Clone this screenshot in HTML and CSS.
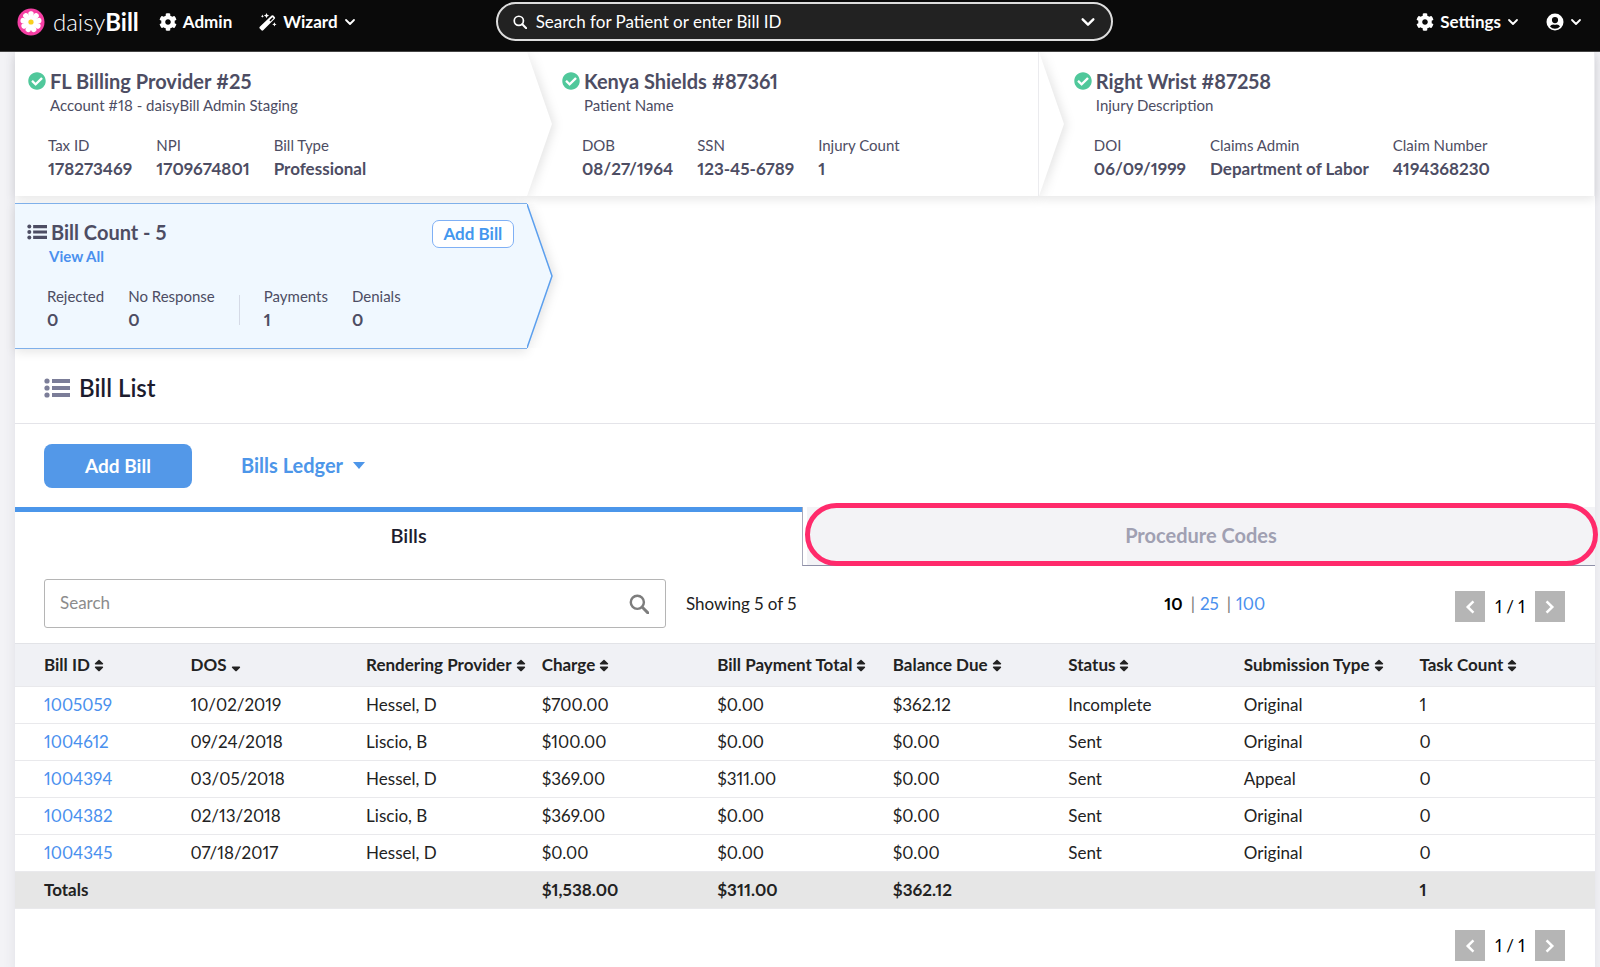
FILE: index.html
```html
<!DOCTYPE html>
<html lang="en">

<head>
    <meta charset="UTF-8">
    <meta name="viewport" content="width=device-width, initial-scale=1.0">
    <title>daisyBill - Bill List</title>
    <link rel="stylesheet" href="styles.css">
</head>

<body>
    <!-- icons -->
    <svg class="sprite" aria-hidden="true">
        <symbol id="cog" viewBox="0 0 512 512">
            <path d="M487.4 315.7l-42.6-24.6c4.3-23.2 4.3-47 0-70.2l42.6-24.6c4.9-2.8 7.1-8.6 5.5-14-11.1-35.6-30-67.8-54.7-94.6-3.8-4.1-10-5.1-14.8-2.3L380.8 110c-17.9-15.4-38.5-27.3-60.8-35.1V25.8c0-5.6-3.9-10.5-9.4-11.7-36.7-8.2-74.3-7.8-109.2 0-5.5 1.2-9.4 6.1-9.4 11.7V75c-22.2 7.9-42.8 19.8-60.8 35.1L88.7 85.5c-4.9-2.8-11-1.9-14.8 2.3-24.7 26.7-43.6 58.9-54.7 94.6-1.7 5.4.6 11.2 5.5 14L67.3 221c-4.3 23.2-4.3 47 0 70.2l-42.6 24.6c-4.9 2.8-7.1 8.6-5.5 14 11.1 35.6 30 67.8 54.7 94.6 3.8 4.1 10 5.1 14.8 2.3l42.6-24.6c17.9 15.4 38.5 27.3 60.8 35.1v49.2c0 5.6 3.9 10.5 9.4 11.7 36.7 8.2 74.3 7.8 109.2 0 5.5-1.2 9.4-6.1 9.4-11.7v-49.2c22.2-7.9 42.8-19.8 60.8-35.1l42.6 24.6c4.9 2.8 11 1.9 14.8-2.3 24.7-26.7 43.6-58.9 54.7-94.6 1.5-5.5-.7-11.3-5.6-14.1zM256 336c-44.1 0-80-35.9-80-80s35.9-80 80-80 80 35.9 80 80-35.9 80-80 80z" />
        </symbol>
        <symbol id="check" viewBox="0 0 512 512">
            <path d="M504 256c0 136.967-111.033 248-248 248S8 392.967 8 256 119.033 8 256 8s248 111.033 248 248zM227.314 387.314l184-184c6.248-6.248 6.248-16.379 0-22.627l-22.627-22.627c-6.248-6.249-16.379-6.249-22.628 0L216 308.118l-70.059-70.059c-6.248-6.248-16.379-6.248-22.628 0l-22.627 22.627c-6.248 6.248-6.248 16.379 0 22.627l104 104c6.249 6.249 16.379 6.249 22.628.001z" />
        </symbol>
        <symbol id="sort" viewBox="0 0 320 512">
            <path d="M41 288h238c21.4 0 32.1 25.9 17 41L177 448c-9.4 9.4-24.6 9.4-33.9 0L24 329c-15.1-15.1-4.4-41 17-41zm255-105L177 64c-9.4-9.4-24.6-9.4-33.9 0L24 183c-15.1 15.1-4.4 41 17 41h238c21.4 0 32.1-25.9 17-41z" />
        </symbol>
        <symbol id="sort-down" viewBox="0 0 320 512">
            <path d="M41 288h238c21.4 0 32.1 25.9 17 41L177 448c-9.4 9.4-24.6 9.4-33.9 0L24 329c-15.1-15.1-4.4-41 17-41z" />
        </symbol>
        <symbol id="wand" viewBox="0 0 18 18">
            <path d="M12.6 2.6a1.3 1.3 0 0 1 1.8 0l1.3 1.3a1.3 1.3 0 0 1 0 1.8L4.2 17.2a1.3 1.3 0 0 1-1.8 0L.8 15.6a1.3 1.3 0 0 1 0-1.8zm.9 1.6-3.1 3.1 1.1 1.1 3.1-3.1z" fill-rule="evenodd" />
            <path d="M7.500 0l.8 1.800 1.800.8-1.800.8-.8 1.800-.8-1.800-1.800-.8 1.800-.8zM3.400 1.600l.5 1.100 1.100.5-1.100.5-.5 1.100-.5-1.100-1.100-.5 1.100-.5zM15.400 9.200l.7 1.500 1.500.7-1.500.7-.7 1.500-.7-1.500-1.500-.7 1.500-.7z" />
        </symbol>
        <symbol id="down" viewBox="0 0 12 12">
            <path d="M2 4l4 4 4-4" fill="none" stroke="currentColor" stroke-width="1.8" stroke-linecap="round" stroke-linejoin="round" />
        </symbol>
        <symbol id="search" viewBox="0 0 18 18">
            <circle cx="7.5" cy="7.5" r="5.9" fill="none" stroke="currentColor" stroke-width="2.2" />
            <path d="M12 12l5 5" fill="none" stroke="currentColor" stroke-width="2.6" stroke-linecap="round" />
        </symbol>
        <symbol id="user" viewBox="0 0 18 18">
            <path d="M9 .5a8.5 8.5 0 1 0 0 17 8.5 8.5 0 0 0 0-17zM9 4a3.1 3.1 0 1 1 0 6.2A3.1 3.1 0 0 1 9 4zM4 13.6c.6-1.5 1.9-2.2 3.3-2.2 1.1.4 2.3.4 3.4 0 1.4 0 2.7.7 3.3 2.2a6.7 6.7 0 0 1-10 0z" fill-rule="evenodd" />
        </symbol>
        <symbol id="list" viewBox="0 0 26 20">
            <circle cx="3" cy="3" r="2.6" />
            <circle cx="3" cy="10" r="2.6" />
            <circle cx="3" cy="17" r="2.6" />
            <path d="M8 1h18v4H8zM8 8h18v4H8zM8 15h18v4H8z" />
        </symbol>
        <symbol id="prev" viewBox="0 0 14 14">
            <path d="M10 2L5 7l5 5" fill="none" stroke="currentColor" stroke-width="2.2" />
        </symbol>
        <symbol id="next" viewBox="0 0 14 14">
            <path d="M4 2l5 5-5 5" fill="none" stroke="currentColor" stroke-width="2.2" />
        </symbol>
        <symbol id="petal" viewBox="0 0 28 28">
            <path d="M14 14C12.500 11 11 7.500 11.300 5.300 11.600 2.700 16.400 2.700 16.700 5.300 17 7.500 15.500 11 14 14z" />
        </symbol>
    </svg>

    <header class="topbar">
        <nav class="nav-left">
            <a class="logo" href="#">
                <svg width="28" height="28" viewBox="0 0 28 28">
                    <circle cx="14" cy="14" r="13.5" fill="#f63fa4" />
                    <g fill="#fff">
                        <use href="#petal" width="28" height="28" />
                        <use href="#petal" width="28" height="28" transform="rotate(40 14 14)" />
                        <use href="#petal" width="28" height="28" transform="rotate(80 14 14)" />
                        <use href="#petal" width="28" height="28" transform="rotate(120 14 14)" />
                        <use href="#petal" width="28" height="28" transform="rotate(160 14 14)" />
                        <use href="#petal" width="28" height="28" transform="rotate(200 14 14)" />
                        <use href="#petal" width="28" height="28" transform="rotate(240 14 14)" />
                        <use href="#petal" width="28" height="28" transform="rotate(280 14 14)" />
                        <use href="#petal" width="28" height="28" transform="rotate(320 14 14)" />
                    </g>
                    <circle cx="14" cy="14" r="2.6" fill="#f8cf1c" />
                </svg>
                <span>daisy<b>Bill</b></span>
            </a>
            <a class="nav-link" href="#"><svg class="i18"><use href="#cog" /></svg>Admin</a>
            <button class="nav-link wizard" type="button"><svg class="i18"><use href="#wand" /></svg>Wizard<svg class="i12"><use href="#down" /></svg></button>
        </nav>
        <div class="top-search">
            <svg class="i14"><use href="#search" /></svg>
            <input type="text" aria-label="Search for Patient or enter Bill ID" placeholder="Search for Patient or enter Bill ID">
            <button type="button" aria-label="Search options"><svg class="i16"><use href="#down" /></svg></button>
        </div>
        <nav class="nav-right">
            <button class="nav-link" type="button"><svg class="i18"><use href="#cog" /></svg>Settings<svg class="i12"><use href="#down" /></svg></button>
            <button class="nav-link" type="button" aria-label="Account"><svg class="i18"><use href="#user" /></svg><svg class="i12"><use href="#down" /></svg></button>
        </nav>
    </header>

    <main class="page">
        <div class="crumbs">
            <section class="crumb first">
                <h2><svg class="i18 ok"><use href="#check" /></svg>FL Billing Provider #25</h2>
                <p>Account #18 - daisyBill Admin Staging</p>
                <dl>
                    <div><dt>Tax ID</dt><dd>178273469</dd></div>
                    <div><dt>NPI</dt><dd>1709674801</dd></div>
                    <div><dt>Bill Type</dt><dd>Professional</dd></div>
                </dl>
                <svg class="arrow" viewBox="0 0 26 144" preserveAspectRatio="none"><path d="M0 0L25 72 0 144z" /></svg>
            </section>
            <section class="crumb">
                <h2><svg class="i18 ok"><use href="#check" /></svg>Kenya Shields #87361</h2>
                <p>Patient Name</p>
                <dl>
                    <div><dt>DOB</dt><dd>08/27/1964</dd></div>
                    <div><dt>SSN</dt><dd>123-45-6789</dd></div>
                    <div><dt>Injury Count</dt><dd>1</dd></div>
                </dl>
                <svg class="arrow" viewBox="0 0 26 144" preserveAspectRatio="none"><path d="M0 0L25 72 0 144z" /></svg>
            </section>
            <section class="crumb">
                <h2><svg class="i18 ok"><use href="#check" /></svg>Right Wrist #87258</h2>
                <p>Injury Description</p>
                <dl>
                    <div><dt>DOI</dt><dd>06/09/1999</dd></div>
                    <div><dt>Claims Admin</dt><dd>Department of Labor</dd></div>
                    <div><dt>Claim Number</dt><dd>4194368230</dd></div>
                </dl>
            </section>
        </div>

        <div class="crumbs">
            <section class="crumb first count">
                <div class="count-head">
                    <h2><svg class="i20"><use href="#list" /></svg>Bill Count - 5</h2>
                    <button class="add-small" type="button">Add Bill</button>
                </div>
                <p><a href="#">View All</a></p>
                <dl>
                    <div><dt>Rejected</dt><dd>0</dd></div>
                    <div><dt>No Response</dt><dd>0</dd></div>
                    <div class="split"><dt>Payments</dt><dd>1</dd></div>
                    <div><dt>Denials</dt><dd>0</dd></div>
                </dl>
                <svg class="arrow" viewBox="0 0 26 144" preserveAspectRatio="none"><path d="M0 0L25 72 0 144" /></svg>
            </section>
        </div>

        <h1 class="title"><svg class="i26"><use href="#list" /></svg>Bill List</h1>

        <div class="actions">
            <button class="add" type="button">Add Bill</button>
            <button class="ledger" type="button">Bills Ledger<span class="caret"></span></button>
        </div>

        <div class="tabs" role="tablist">
            <button class="tab on" type="button" role="tab" aria-selected="true">Bills</button>
            <div class="tab-slot">
                <button class="tab" type="button" role="tab" aria-selected="false">Procedure Codes</button>
            </div>
        </div>

        <div class="tools">
            <div class="search">
                <input type="text" aria-label="Search bills" placeholder="Search">
                <svg class="i20"><use href="#search" /></svg>
            </div>
            <span class="showing">Showing 5 of 5</span>
            <div class="sizes"><b>10</b><i>|</i><a href="#">25</a><i>|</i><a href="#">100</a></div>
            <div class="pager">
                <button type="button" aria-label="Previous page"><svg class="i16"><use href="#prev" /></svg></button>
                <span>1 / 1</span>
                <button type="button" aria-label="Next page"><svg class="i16"><use href="#next" /></svg></button>
            </div>
        </div>

        <table class="bills">
            <thead>
                <tr>
                    <th>Bill ID<svg class="sort"><use href="#sort" /></svg></th>
                    <th>DOS<svg class="sort"><use href="#sort-down" /></svg></th>
                    <th>Rendering Provider<svg class="sort"><use href="#sort" /></svg></th>
                    <th>Charge<svg class="sort"><use href="#sort" /></svg></th>
                    <th>Bill Payment Total<svg class="sort"><use href="#sort" /></svg></th>
                    <th>Balance Due<svg class="sort"><use href="#sort" /></svg></th>
                    <th>Status<svg class="sort"><use href="#sort" /></svg></th>
                    <th>Submission Type<svg class="sort"><use href="#sort" /></svg></th>
                    <th>Task Count<svg class="sort"><use href="#sort" /></svg></th>
                </tr>
            </thead>
            <tbody>
                <tr>
                    <td><a href="#">1005059</a></td>
                    <td>10/02/2019</td>
                    <td>Hessel, D</td>
                    <td>$700.00</td>
                    <td>$0.00</td>
                    <td>$362.12</td>
                    <td>Incomplete</td>
                    <td>Original</td>
                    <td>1</td>
                </tr>
                <tr>
                    <td><a href="#">1004612</a></td>
                    <td>09/24/2018</td>
                    <td>Liscio, B</td>
                    <td>$100.00</td>
                    <td>$0.00</td>
                    <td>$0.00</td>
                    <td>Sent</td>
                    <td>Original</td>
                    <td>0</td>
                </tr>
                <tr>
                    <td><a href="#">1004394</a></td>
                    <td>03/05/2018</td>
                    <td>Hessel, D</td>
                    <td>$369.00</td>
                    <td>$311.00</td>
                    <td>$0.00</td>
                    <td>Sent</td>
                    <td>Appeal</td>
                    <td>0</td>
                </tr>
                <tr>
                    <td><a href="#">1004382</a></td>
                    <td>02/13/2018</td>
                    <td>Liscio, B</td>
                    <td>$369.00</td>
                    <td>$0.00</td>
                    <td>$0.00</td>
                    <td>Sent</td>
                    <td>Original</td>
                    <td>0</td>
                </tr>
                <tr>
                    <td><a href="#">1004345</a></td>
                    <td>07/18/2017</td>
                    <td>Hessel, D</td>
                    <td>$0.00</td>
                    <td>$0.00</td>
                    <td>$0.00</td>
                    <td>Sent</td>
                    <td>Original</td>
                    <td>0</td>
                </tr>
            </tbody>
            <tfoot>
                <tr>
                    <td>Totals</td>
                    <td></td>
                    <td></td>
                    <td>$1,538.00</td>
                    <td>$311.00</td>
                    <td>$362.12</td>
                    <td></td>
                    <td></td>
                    <td>1</td>
                </tr>
            </tfoot>
        </table>

        <div class="tools bottom">
            <div class="pager">
                <button type="button" aria-label="Previous page"><svg class="i16"><use href="#prev" /></svg></button>
                <span>1 / 1</span>
                <button type="button" aria-label="Next page"><svg class="i16"><use href="#next" /></svg></button>
            </div>
        </div>
    </main>
</body>

</html>
```

FILE: styles.css
```css
* {
    box-sizing: border-box;
}

body {
    margin: 0;
    background: #f3f3f6;
    color: #222;
    font-family: Lato, "Liberation Sans", sans-serif;
    font-size: 17px;
    font-variant-numeric: proportional-nums;
    overflow-x: hidden;
}

h1,
h2,
p,
dl,
dd {
    margin: 0;
}

a {
    color: #4a90ee;
    text-decoration: none;
}

button {
    padding: 0;
    border: 0;
    background: none;
    color: inherit;
    font: inherit;
    cursor: pointer;
}

svg {
    flex: none;
    fill: currentColor;
}

.sprite {
    display: none;
}

.i12 {
    width: 12px;
    height: 12px;
}

.i14 {
    width: 14px;
    height: 14px;
}

.i16 {
    width: 16px;
    height: 16px;
}

.i18 {
    width: 18px;
    height: 18px;
}

.i20 {
    width: 20px;
    height: 20px;
}

.i26 {
    width: 26px;
    height: 20px;
}

/* top bar */
.topbar {
    position: relative;
    z-index: 5;
    display: grid;
    grid-template-columns: 1.02fr minmax(300px, 617px) 1fr;
    align-items: center;
    height: 52px;
    padding: 0 18px 8px 17px;
    background: #0a0a0a;
    border-bottom: 1px solid #444;
    color: #fff;
}

.nav-left,
.nav-right {
    display: flex;
    align-items: center;
}

.nav-right {
    justify-content: flex-end;
    gap: 27px;
}

.logo {
    display: flex;
    align-items: center;
    gap: 8px;
    margin-right: 20px;
    color: #fff;
    font-size: 24px;
    font-weight: 300;
}

.logo b {
    font-weight: 700;
}

.nav-link {
    display: flex;
    align-items: center;
    gap: 6px;
    color: #fff;
    font-weight: 700;
}

.wizard {
    margin-left: 27px;
}

.top-search {
    display: flex;
    align-items: center;
    gap: 9px;
    height: 39px;
    padding: 0 15px;
    border: 2px solid #ddd;
    border-radius: 20px;
    background: #222;
}

.top-search input {
    flex: 1;
    min-width: 0;
    padding: 0;
    border: 0;
    outline: 0;
    background: none;
    color: #fff;
    font: inherit;
}

.top-search input::placeholder {
    color: #fff;
    opacity: 1;
}

.top-search button {
    display: flex;
}

/* page */
.page {
    min-height: 915px;
    margin: 0 5px 0 15px;
    background: #fff;
    box-shadow: 0 0 12px rgba(60, 60, 90, 0.1);
}

.crumbs {
    display: flex;
    margin-bottom: 7px;
}

.crumb {
    position: relative;
    flex: 1;
    padding: 17px 35px 15px;
    border-right: 1px solid #ececef;
    background: #fff;
    box-shadow: 0 3px 10px rgba(0, 0, 0, 0.1);
    color: #4d4d63;
}

.crumb:not(:last-child),
.crumb.count {
    flex: 0 0 32.4%;
}

.crumb.first {
    z-index: 2;
    padding-left: 13px;
    border-right: 0;
}

.crumb:nth-child(2) {
    z-index: 1;
}

.crumb h2 {
    display: flex;
    align-items: center;
    gap: 4px;
    font-size: 20px;
    line-height: 24px;
    font-weight: 700;
}

.ok {
    color: #50c89b;
}

.crumb p {
    margin: 2px 0 20px 22px;
    font-size: 15px;
    line-height: 20px;
}

.crumb dl {
    display: flex;
    gap: 24px;
    margin-left: 20px;
}

.crumb dt {
    font-size: 15px;
    line-height: 20px;
}

.crumb dd {
    margin-top: 2px;
    font-size: 17px;
    line-height: 24px;
    font-weight: 700;
}

.arrow {
    position: absolute;
    top: 0;
    left: 100%;
    width: 26px;
    height: 100%;
    fill: #fff;
    overflow: visible;
    filter: drop-shadow(3px 1px 5px rgba(0, 0, 0, 0.1));
    clip-path: inset(0 -20px 0 0);
}

.crumb:nth-child(2) .arrow {
    left: calc(100% + 1px);
}

/* bill count box */
.crumb.count {
    padding: 16px 35px 16px 12px;
    border: 1px solid #7fb0ea;
    border-width: 1px 0;
    background: #f0f8ff;
}

.count .arrow {
    fill: #f0f8ff;
    stroke: #5b9fee;
    stroke-width: 1.5;
}

.count-head {
    display: flex;
    justify-content: space-between;
    height: 24px;
    margin-right: -22px;
}

.add-small {
    width: 82px;
    height: 28px;
    padding-bottom: 2px;
    border: 1px solid #7fb0f5;
    border-radius: 7px;
    background: #fff;
    color: #4397ee;
    font-weight: 700;
}

.count p {
    font-weight: 700;
}

.split {
    position: relative;
    padding-left: 25px;
}

.split::before {
    content: "";
    position: absolute;
    top: 9px;
    left: 0;
    height: 30px;
    border-left: 1px solid #d5dae6;
}

/* title and buttons */
.title {
    display: flex;
    align-items: center;
    gap: 9px;
    margin-top: -7px;
    padding: 24px 29px 20px;
    border-bottom: 1px solid #e4e4e9;
    color: #1c1c2e;
    font-size: 24px;
    line-height: 30px;
    font-weight: 600;
}

.title svg {
    color: #7b7d98;
}

.actions {
    display: flex;
    gap: 49px;
    padding: 20px 29px 19px;
    font-size: 20px;
    font-weight: 700;
}

.add {
    width: 148px;
    height: 44px;
    padding-bottom: 2px;
    border-radius: 8px;
    background: #5398e8;
    color: #fff;
    font-size: 19px;
}

.ledger {
    display: flex;
    align-items: center;
    gap: 10px;
    padding-bottom: 2px;
    color: #4d96e9;
}

.caret {
    border: 6px solid transparent;
    border-top: 7px solid #4d96e9;
    border-bottom: 0;
}

/* tabs */
.tabs {
    display: grid;
    grid-template-columns: 787fr 793fr;
    height: 59px;
}

.tab {
    position: relative;
    display: block;
    width: 100%;
    height: 100%;
    padding-bottom: 3px;
    background: #f3f3f6;
    color: #a0a0b2;
    font-size: 20px;
    font-weight: 700;
}

.tab.on {
    padding-bottom: 8px;
    border-top: 5px solid #4b96ea;
    background: #fff;
    color: #1c1c2e;
    font-weight: 600;
}

.tab-slot {
    padding-left: 4px;
    border-bottom: 1px solid #8f90a8;
    border-left: 1px solid #a9aabb;
}

/* ring round the procedure codes tab */
.tab-slot .tab::after {
    content: "";
    position: absolute;
    inset: -4px -3px -1px -2px;
    border: 5px solid #ff2a6b;
    border-radius: 32px;
}

/* search and paging */
.tools {
    display: flex;
    align-items: center;
    padding: 13px 30px 15px 29px;
}

.tools.bottom {
    padding-top: 15px;
}

.search {
    position: relative;
    flex: 0 1 622px;
}

.search input {
    display: block;
    width: 100%;
    height: 49px;
    padding: 0 50px 2px 15px;
    border: 1px solid #b5b5b5;
    border-radius: 3px;
    font: inherit;
}

.search input::placeholder {
    color: #8c8c8c;
    opacity: 1;
}

.search svg {
    position: absolute;
    top: 15px;
    right: 17px;
    color: #7d7d7d;
}

.showing {
    margin-left: 20px;
}

.sizes {
    display: flex;
    gap: 5px;
    margin-right: 190px;
    margin-left: auto;
    color: #000;
}

.sizes i {
    margin-left: 3px;
    color: #777;
    font-style: normal;
}

.pager {
    display: flex;
    align-items: center;
    gap: 10px;
    margin-left: auto;
    padding-top: 6px;
    color: #000;
}

.sizes + .pager {
    margin-left: 0;
}

.pager button {
    display: flex;
    align-items: center;
    justify-content: center;
    width: 30px;
    height: 31px;
    background: #b5b5b5;
    color: #fff;
}

/* table */
.bills {
    width: 100%;
    border-collapse: collapse;
    table-layout: fixed;
    text-align: left;
}

.bills th,
.bills td {
    height: 37px;
    padding: 0 0 1px;
    border-bottom: 1px solid #e9e9ec;
    white-space: nowrap;
}

.bills th {
    height: 43px;
    border-top: 1px solid #e2e3e7;
    background: #f0f1f5;
    font-weight: 700;
}

.bills th:first-child,
.bills td:first-child {
    padding-left: 29px;
}

.bills tfoot td {
    padding-bottom: 2px;
    background: #e6e6e6;
    font-weight: 700;
}

.sort {
    width: 10px;
    height: 15px;
    margin-left: 4px;
    vertical-align: -2px;
}
```
